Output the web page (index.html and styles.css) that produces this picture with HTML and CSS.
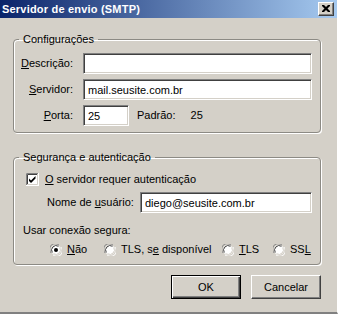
FILE: index.html
```html
<!DOCTYPE html>
<html>
<head>
<meta charset="utf-8">
<link rel="stylesheet" href="styles.css">
</head>
<body>
<div class="window">
  <div class="titlebar">
    <span class="title">Servidor de envio (SMTP)</span>
    <span class="close">
      <svg width="8" height="7" viewBox="0 0 8 7"><path d="M0 0h2l2 2 2-2h2v1l-2.5 2.5L8 6v1H6L4 5 2 7H0V6l2.5-2.5L0 1z" fill="#000"/></svg>
    </span>
  </div>
  <div class="content">
    <fieldset class="group g1">
      <legend>Configurações</legend>
      <div class="form">
        <label class="lbl"><u>D</u>escrição:</label>
        <div class="edit wide"></div>
        <label class="lbl"><u>S</u>ervidor:</label>
        <div class="edit wide">mail.seusite.com.br</div>
        <label class="lbl"><u>P</u>orta:</label>
        <div class="portrow">
          <div class="edit port">25</div>
          <span class="padrao">Padrão:</span>
          <span class="padraoval">25</span>
        </div>
      </div>
    </fieldset>
    <fieldset class="group g2">
      <legend>Segurança e autenticação</legend>
      <div class="checkrow">
        <svg class="check" width="13" height="13" viewBox="0 0 13 13">
          <rect x="0" y="0" width="13" height="13" fill="#fff"/>
          <path d="M0.5 13V0.5H13" stroke="#808080" fill="none"/>
          <path d="M1.5 12V1.5H12" stroke="#404040" fill="none"/>
          <path d="M0 12.5H12.5V0" stroke="#fff" fill="none"/>
          <path d="M1 11.5H11.5V1" stroke="#D4D0C8" fill="none"/>
          <path d="M3 5.5l2 2 4.5-4.5v2.5l-4.5 4.5-2-2z" fill="#000"/>
        </svg>
        <span><u>O</u> servidor requer autenticação</span>
      </div>
      <div class="userrow">
        <span class="userlbl">Nome de <u>u</u>suário:</span>
        <div class="edit user">diego@seusite.com.br</div>
      </div>
      <div class="secure">Usar conexão segura:</div>
      <div class="radios">
        <div class="ritem">
          <svg class="radio" width="12" height="12" viewBox="0 0 12 12">
            <circle cx="6" cy="6" r="5" fill="#fff"/>
            <path d="M1.2 9A5.5 5.5 0 0 1 9 1.2" stroke="#808080" fill="none"/>
            <path d="M2.3 8.5A4.5 4.5 0 0 1 8.5 2.3" stroke="#404040" fill="none"/>
            <path d="M10.8 3A5.5 5.5 0 0 1 3 10.8" stroke="#fff" fill="none"/>
            <path d="M9.7 3.5A4.5 4.5 0 0 1 3.5 9.7" stroke="#D4D0C8" fill="none"/>
            <circle cx="6" cy="6" r="2" fill="#000"/>
          </svg>
          <span><u>N</u>ão</span>
        </div>
        <div class="ritem">
          <svg class="radio" width="12" height="12" viewBox="0 0 12 12">
            <circle cx="6" cy="6" r="5" fill="#fff"/>
            <path d="M1.2 9A5.5 5.5 0 0 1 9 1.2" stroke="#808080" fill="none"/>
            <path d="M2.3 8.5A4.5 4.5 0 0 1 8.5 2.3" stroke="#404040" fill="none"/>
            <path d="M10.8 3A5.5 5.5 0 0 1 3 10.8" stroke="#fff" fill="none"/>
            <path d="M9.7 3.5A4.5 4.5 0 0 1 3.5 9.7" stroke="#D4D0C8" fill="none"/>
          </svg>
          <span>TLS, s<u>e</u> disponível</span>
        </div>
        <div class="ritem">
          <svg class="radio" width="12" height="12" viewBox="0 0 12 12">
            <circle cx="6" cy="6" r="5" fill="#fff"/>
            <path d="M1.2 9A5.5 5.5 0 0 1 9 1.2" stroke="#808080" fill="none"/>
            <path d="M2.3 8.5A4.5 4.5 0 0 1 8.5 2.3" stroke="#404040" fill="none"/>
            <path d="M10.8 3A5.5 5.5 0 0 1 3 10.8" stroke="#fff" fill="none"/>
            <path d="M9.7 3.5A4.5 4.5 0 0 1 3.5 9.7" stroke="#D4D0C8" fill="none"/>
          </svg>
          <span><u>T</u>LS</span>
        </div>
        <div class="ritem">
          <svg class="radio" width="12" height="12" viewBox="0 0 12 12">
            <circle cx="6" cy="6" r="5" fill="#fff"/>
            <path d="M1.2 9A5.5 5.5 0 0 1 9 1.2" stroke="#808080" fill="none"/>
            <path d="M2.3 8.5A4.5 4.5 0 0 1 8.5 2.3" stroke="#404040" fill="none"/>
            <path d="M10.8 3A5.5 5.5 0 0 1 3 10.8" stroke="#fff" fill="none"/>
            <path d="M9.7 3.5A4.5 4.5 0 0 1 3.5 9.7" stroke="#D4D0C8" fill="none"/>
          </svg>
          <span>SS<u>L</u></span>
        </div>
      </div>
    </fieldset>
    <div class="buttons">
      <div class="btn default"><span>OK</span></div>
      <div class="btn"><span>Cancelar</span></div>
    </div>
  </div>
</div>
</body>
</html>
```
FILE: styles.css
```css
* { box-sizing: border-box; }
html, body { margin: 0; padding: 0; }
body {
  font-family: "Liberation Sans", Arial, sans-serif;
  font-size: 11px;
  line-height: 13px;
  color: #000;
  background: #D4D0C8;
}
u { text-decoration: underline; text-underline-offset: 1px; }
.window {
  width: 338px;
  height: 314px;
  background: #D4D0C8;
  display: flex;
  flex-direction: column;
  border-bottom: 2px solid #808080;
  border-right: 1px solid #ffffff;
}
.titlebar {
  height: 18px;
  flex: none;
  background: linear-gradient(to right, #0A246A, #A6CAF0);
  display: flex;
  align-items: center;
  justify-content: space-between;
  padding: 0 3px 0 2px;
}
.title {
  color: #fff;
  font-weight: bold;
  font-size: 11px;
  letter-spacing: 0.2px;
}
.close {
  width: 16px;
  height: 14px;
  background: #D4D0C8;
  border-top: 1px solid #fff;
  border-left: 1px solid #fff;
  border-right: 1px solid #404040;
  border-bottom: 1px solid #404040;
  box-shadow: inset -1px -1px 0 #808080;
  display: flex;
  align-items: center;
  justify-content: center;
  padding-bottom: 1px;
}
.content {
  padding: 15px 0 0 13px;
  width: 321px;
}
.group {
  margin: 0;
  padding: 0;
  border: 1px solid #8c8a84;
  border-radius: 4px;
  box-shadow: 1px 1px 0 #fff, inset 1px 1px 0 #fff;
  width: 308px;
  min-width: 0;
}
.group legend {
  margin-left: 5px;
  padding: 0 4px;
  line-height: 13px;
}
.g1 { padding: 7px 7px 6px 0; }
.form {
  display: grid;
  grid-template-columns: 59px 229px;
  column-gap: 10px;
  row-gap: 5px;
  align-items: center;
}
.lbl { text-align: right; }
.edit {
  height: 21px;
  background: #fff;
  border-top: 1px solid #808080;
  border-left: 1px solid #808080;
  border-right: 1px solid #fff;
  border-bottom: 1px solid #fff;
  box-shadow: inset 1px 1px 0 #404040, inset -1px -1px 0 #D4D0C8;
  padding: 4px 3px 0 4px;
  white-space: nowrap;
  overflow: hidden;
}
.portrow { display: flex; align-items: center; justify-self: start; }
.edit.port { flex: 0 0 46px; width: 46px; }
.padrao { margin-left: 8px; }
.padraoval { margin-left: 15px; }
.g2 {
  margin-top: 18px;
  padding: 9px 7px 8px 0;
}
.checkrow {
  display: flex;
  align-items: center;
  height: 13px;
  margin-left: 12px;
}
.check { flex: none; margin-right: 6px; }
.userrow {
  display: flex;
  align-items: center;
  margin-top: 6px;
  margin-left: 33px;
}
.userlbl { width: 93px; }
.edit.user { width: 172px; }
.secure { margin: 11px 0 0 9px; }
.radios {
  display: grid;
  grid-template-columns: 54px 118px 51px auto;
  margin: 6px 0 0 36px;
}
.ritem { display: flex; align-items: center; height: 13px; }
.radio { flex: none; margin-right: 5px; }
.buttons {
  display: flex;
  justify-content: flex-end;
  gap: 10px;
  margin-top: 10px;
  width: 308px;
}
.btn {
  width: 70px;
  height: 24px;
  background: #D4D0C8;
  border-top: 1px solid #fff;
  border-left: 1px solid #fff;
  border-right: 1px solid #404040;
  border-bottom: 1px solid #404040;
  box-shadow: inset -1px -1px 0 #808080;
  display: flex;
  align-items: center;
  justify-content: center;
}
.btn.default {
  border: 1px solid #000;
  box-shadow: inset 1px 1px 0 #fff, inset -1px -1px 0 #404040, inset -2px -2px 0 #808080;
}
```
